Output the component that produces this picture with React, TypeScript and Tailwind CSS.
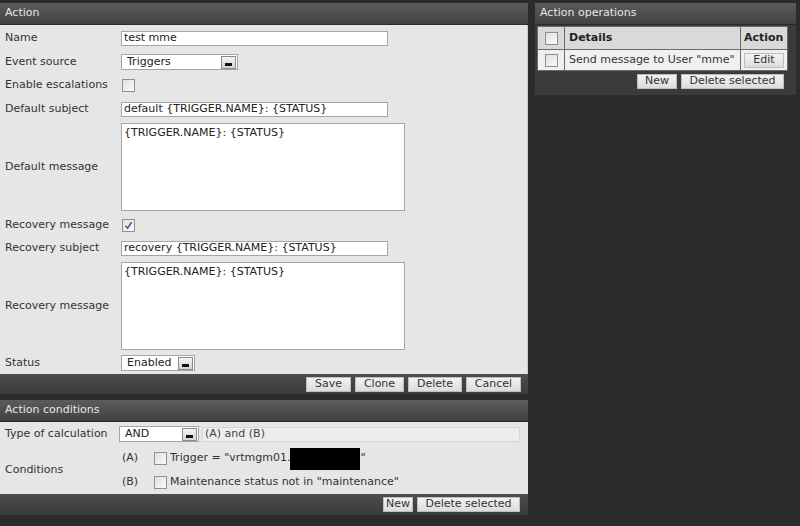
import React from "react";

const font = { fontFamily: '"DejaVu Sans", Verdana, sans-serif' };

function Header({ title }: { title: string }) {
  return (
    <div className="h-[22px] flex items-center pl-[5px] text-[11px] text-[#e6e6e6] bg-gradient-to-b from-[#5c5c5c] to-[#414141] border-b border-[#2a2a2a]">
      {title}
    </div>
  );
}

function Btn({ label, w }: { label: string; w: string }) {
  return (
    <div className={`${w} h-[15px] flex items-center justify-center text-[11px] text-[#333] bg-gradient-to-b from-[#f2f2f2] to-[#dcdcdc] border border-[#bdbdbd]`}>
      {label}
    </div>
  );
}

function Check({ checked }: { checked?: boolean }) {
  return (
    <div className="w-[13px] h-[13px] border border-[#8f8f8f] bg-gradient-to-br from-[#e0e0e0] to-[#fafafa] flex items-center justify-center">
      {checked && (
        <svg width="9" height="9" viewBox="0 0 9 9">
          <path d="M1.5 4.8 L3.6 7.2 L7.6 1.2" stroke="#3d5f9e" strokeWidth="1.6" fill="none" />
        </svg>
      )}
    </div>
  );
}

function Select({ value, w }: { value: string; w: string }) {
  return (
    <div className={`${w} h-[16px] bg-white border border-[#a5a5a5] flex items-center justify-between pl-[5px] text-[11px] text-[#222]`}>
      <span>{value}</span>
      <div className="w-[15px] h-[13px] mr-[1px] bg-gradient-to-b from-[#f4f4f4] to-[#d4d4d4] border border-[#8a8a8a] flex items-end justify-center pb-[2px]">
        <div className="w-[7px] h-[3px] bg-[#111]" />
      </div>
    </div>
  );
}

function Row({ label, h, children }: { label: string; h: string; children: React.ReactNode }) {
  return (
    <div className={`${h} flex items-center`}>
      <div className="w-[121px] pl-[5px] text-[11px] text-[#333] shrink-0">{label}</div>
      <div className="flex items-center">{children}</div>
    </div>
  );
}

function TextInput({ value, w }: { value: string; w: string }) {
  return (
    <div className={`${w} h-[15px] bg-white border border-[#a5a5a5] flex items-center pl-[2px] text-[11px] text-[#222]`}>
      {value}
    </div>
  );
}

function TextArea({ value }: { value: string }) {
  return (
    <div className="w-[284px] h-[88px] bg-white border border-[#a5a5a5] pl-[2px] pt-[1px] text-[11px] text-[#222]">
      {value}
    </div>
  );
}

export default function App() {
  return (
    <div style={font} className="w-[800px] h-[526px] bg-[#2b2b2b] overflow-hidden flex gap-[7px] pt-[3px]">
      <div className="w-[528px] flex flex-col">
        {/* Action panel */}
        <div className="flex flex-col">
          <Header title="Action" />
          <div className="bg-[#e6e6e6] pt-[2px] border-r border-[#c8c8c8]">
            <Row label="Name" h="h-[23px]">
              <TextInput value="test mme" w="w-[267px]" />
            </Row>
            <Row label="Event source" h="h-[24px]">
              <Select value="Triggers" w="w-[117px]" />
            </Row>
            <Row label="Enable escalations" h="h-[23px]">
              <div className="pl-[1px]"><Check /></div>
            </Row>
            <Row label="Default subject" h="h-[24px]">
              <TextInput value="default {TRIGGER.NAME}: {STATUS}" w="w-[267px]" />
            </Row>
            <Row label="Default message" h="h-[92px]">
              <TextArea value="{TRIGGER.NAME}: {STATUS}" />
            </Row>
            <Row label="Recovery message" h="h-[24px]">
              <div className="pl-[1px]"><Check checked /></div>
            </Row>
            <Row label="Recovery subject" h="h-[23px]">
              <TextInput value="recovery {TRIGGER.NAME}: {STATUS}" w="w-[267px]" />
            </Row>
            <Row label="Recovery message" h="h-[92px]">
              <TextArea value="{TRIGGER.NAME}: {STATUS}" />
            </Row>
            <Row label="Status" h="h-[22px]">
              <Select value="Enabled" w="w-[74px]" />
            </Row>
          </div>
          <div className="h-[20px] bg-gradient-to-b from-[#4e4e4e] to-[#3a3a3a] flex items-center justify-end gap-[4px] pr-[7px]">
            <Btn label="Save" w="w-[45px]" />
            <Btn label="Clone" w="w-[49px]" />
            <Btn label="Delete" w="w-[54px]" />
            <Btn label="Cancel" w="w-[55px]" />
          </div>
        </div>

        {/* Action conditions */}
        <div className="flex flex-col mt-[6px]">
          <Header title="Action conditions" />
          <div className="bg-[#e6e6e6]">
            <div className="h-[24px] flex items-center">
              <div className="w-[119px] pl-[5px] text-[11px] text-[#333] shrink-0">Type of calculation</div>
              <Select value="AND" w="w-[80px]" />
              <div className="ml-[3px] w-[318px] h-[15px] bg-[#ededed] border border-[#d6d6d6] flex items-center pl-[2px] text-[11px] text-[#444]">
                (A) and (B)
              </div>
            </div>
            <div className="flex items-center h-[48px]">
              <div className="w-[121px] pl-[5px] text-[11px] text-[#333] shrink-0">Conditions</div>
              <div className="flex flex-col">
                <div className="h-[25px] flex items-center text-[11px] text-[#333]">
                  <span className="w-[33px] pl-[1px]">(A)</span>
                  <Check />
                  <span className="ml-[3px]">Trigger = "vrtmgm01.</span>
                  <span className="w-[70px] h-[22px] bg-black inline-block" />
                  <span>"</span>
                </div>
                <div className="h-[23px] flex items-center text-[11px] text-[#333]">
                  <span className="w-[33px] pl-[1px]">(B)</span>
                  <Check />
                  <span className="ml-[3px]">Maintenance status not in "maintenance"</span>
                </div>
              </div>
            </div>
          </div>
          <div className="h-[21px] bg-gradient-to-b from-[#4e4e4e] to-[#3a3a3a] flex items-center justify-end gap-[4px] pr-[8px]">
            <Btn label="New" w="w-[30px]" />
            <Btn label="Delete selected" w="w-[103px]" />
          </div>
        </div>
      </div>

      {/* Right panel */}
      <div className="w-[261px] h-[92px] bg-[#3b3b3b] flex flex-col">
        <Header title="Action operations" />
        <div className="px-[2px] pt-[1px]">
          <div className="border border-[#6a6a6a] flex flex-col w-[251px]">
            <div className="h-[22px] flex bg-[#d9d9d9] text-[11px] font-bold text-[#222]">
              <div className="w-[27px] border-r border-[#6a6a6a] flex items-center justify-center"><Check /></div>
              <div className="flex-1 border-r border-[#6a6a6a] flex items-center pl-[4px]">Details</div>
              <div className="w-[46px] flex items-center pl-[3px]">Action</div>
            </div>
            <div className="h-[21px] flex bg-[#f0f0f0] text-[11px] text-[#333] border-t border-[#6a6a6a]">
              <div className="w-[27px] border-r border-[#6a6a6a] flex items-center justify-center"><Check /></div>
              <div className="flex-1 border-r border-[#6a6a6a] flex items-center pl-[4px] whitespace-nowrap">Send message to User "mme"</div>
              <div className="w-[46px] flex items-center justify-center"><Btn label="Edit" w="w-[40px]" /></div>
            </div>
          </div>
          <div className="h-[19px] flex items-center justify-end gap-[4px] pr-[10px] mt-[1px]">
            <Btn label="New" w="w-[40px]" />
            <Btn label="Delete selected" w="w-[103px]" />
          </div>
        </div>
      </div>
    </div>
  );
}
